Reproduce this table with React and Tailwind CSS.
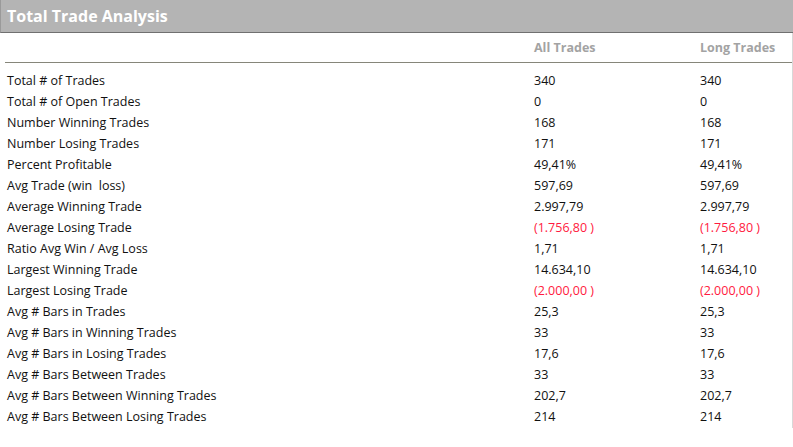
const ROWS = [
  ['Total # of Trades', '340', '340'],
  ['Total # of Open Trades', '0', '0'],
  ['Number Winning Trades', '168', '168'],
  ['Number Losing Trades', '171', '171'],
  ['Percent Profitable', '49,41%', '49,41%'],
  ['Avg Trade (win  loss)', '597,69', '597,69'],
  ['Average Winning Trade', '2.997,79', '2.997,79'],
  ['Average Losing Trade', '(1.756,80 )', '(1.756,80 )', true],
  ['Ratio Avg Win / Avg Loss', '1,71', '1,71'],
  ['Largest Winning Trade', '14.634,10', '14.634,10'],
  ['Largest Losing Trade', '(2.000,00 )', '(2.000,00 )', true],
  ['Avg # Bars in Trades', '25,3', '25,3'],
  ['Avg # Bars in Winning Trades', '33', '33'],
  ['Avg # Bars in Losing Trades', '17,6', '17,6'],
  ['Avg # Bars Between Trades', '33', '33'],
  ['Avg # Bars Between Winning Trades', '202,7', '202,7'],
  ['Avg # Bars Between Losing Trades', '214', '214'],
]

export default function App() {
  return (
    <div className="w-[793px] h-[447px] bg-white overflow-hidden" style={{ fontFamily: '"Open Sans", "Noto Sans", sans-serif' }}>
      {/* Title bar */}
      <div className="h-[33px] bg-[#b4b4b4] border-l border-[#9a9a9a] border-b border-b-[#707070] flex items-center pl-[6px]">
        <h1 className="text-[16px] font-bold text-white">Total Trade Analysis</h1>
      </div>

      <div className="border-r border-[#d8d8d8]">
        {/* Column headers */}
        <div className="ml-[5px] h-[30px] grid grid-cols-[529px_166px_1fr] items-center border-b border-[#86867a] text-[12.5px] font-bold text-[#a3a3a3]">
          <div />
          <div className="pt-[2px]">All Trades</div>
          <div className="pt-[2px]">Long Trades</div>
        </div>

        {/* Rows */}
        <div className="pt-[8px] pl-[7px] text-[12.5px] text-[#111]">
          {ROWS.map(([label, all, long, neg]) => (
            <div key={label} className="h-[21px] grid grid-cols-[527px_166px_1fr] items-center whitespace-pre">
              <div>{label}</div>
              <div className={neg ? 'text-[#ff1a40]' : ''}>{all}</div>
              <div className={neg ? 'text-[#ff1a40]' : ''}>{long}</div>
            </div>
          ))}
        </div>
      </div>
    </div>
  )
}
